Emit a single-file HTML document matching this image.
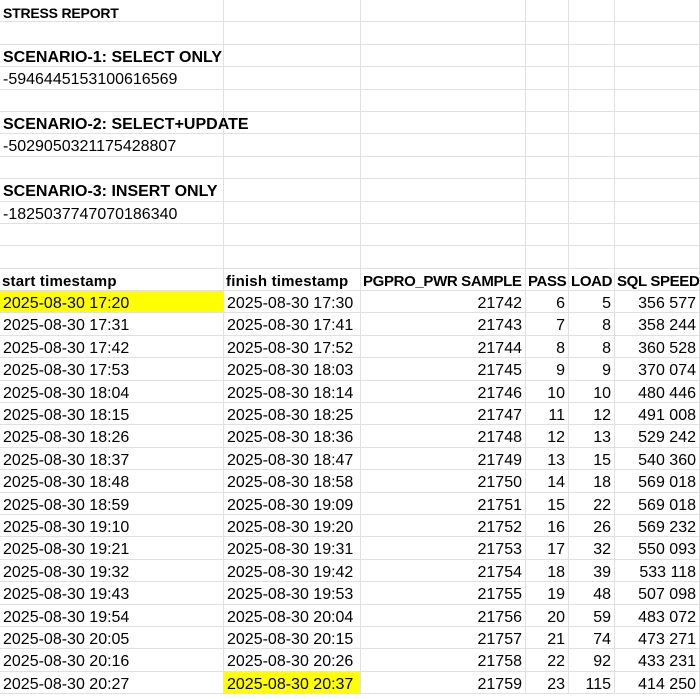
<!DOCTYPE html>
<html><head><meta charset="utf-8"><style>
body{margin:0;background:#fff;width:700px;height:699px;overflow:hidden;font-family:"Liberation Sans",sans-serif;font-size:16px;color:#000}
.r{display:grid;grid-template-columns:224px 137px 165px 43px 46px 85px;height:22.4px;box-sizing:border-box;border-bottom:1px solid #e0e0e0}
.r>div{border-right:1px solid #e0e0e0;line-height:26px;padding:0 3px;white-space:nowrap;overflow:visible;box-sizing:border-box;height:21.4px}
.r>div.n{text-align:right}
.b{font-weight:bold}
.h>div{font-weight:bold;font-size:15px;letter-spacing:-0.35px;padding:0 2px}
.h>div.t{letter-spacing:0.2px}
.s{font-size:14px;letter-spacing:-0.2px}
.y{background:#ffff00}
</style></head><body>
<div class="r"><div class="b s">STRESS REPORT</div><div></div><div></div><div></div><div></div><div></div></div>
<div class="r"><div></div><div></div><div></div><div></div><div></div><div></div></div>
<div class="r"><div class="b">SCENARIO-1: SELECT ONLY</div><div></div><div></div><div></div><div></div><div></div></div>
<div class="r"><div>-5946445153100616569</div><div></div><div></div><div></div><div></div><div></div></div>
<div class="r"><div></div><div></div><div></div><div></div><div></div><div></div></div>
<div class="r"><div class="b">SCENARIO-2: SELECT+UPDATE</div><div></div><div></div><div></div><div></div><div></div></div>
<div class="r"><div>-5029050321175428807</div><div></div><div></div><div></div><div></div><div></div></div>
<div class="r"><div></div><div></div><div></div><div></div><div></div><div></div></div>
<div class="r"><div class="b">SCENARIO-3: INSERT ONLY</div><div></div><div></div><div></div><div></div><div></div></div>
<div class="r"><div>-1825037747070186340</div><div></div><div></div><div></div><div></div><div></div></div>
<div class="r"><div></div><div></div><div></div><div></div><div></div><div></div></div>
<div class="r"><div></div><div></div><div></div><div></div><div></div><div></div></div>
<div class="r h"><div class="t">start timestamp</div><div class="t">finish timestamp</div><div>PGPRO_PWR SAMPLE</div><div>PASS</div><div>LOAD</div><div>SQL SPEED</div></div>
<div class="r"><div class="y">2025-08-30 17:20</div><div>2025-08-30 17:30</div><div class="n">21742</div><div class="n">6</div><div class="n">5</div><div class="n">356 577</div></div>
<div class="r"><div>2025-08-30 17:31</div><div>2025-08-30 17:41</div><div class="n">21743</div><div class="n">7</div><div class="n">8</div><div class="n">358 244</div></div>
<div class="r"><div>2025-08-30 17:42</div><div>2025-08-30 17:52</div><div class="n">21744</div><div class="n">8</div><div class="n">8</div><div class="n">360 528</div></div>
<div class="r"><div>2025-08-30 17:53</div><div>2025-08-30 18:03</div><div class="n">21745</div><div class="n">9</div><div class="n">9</div><div class="n">370 074</div></div>
<div class="r"><div>2025-08-30 18:04</div><div>2025-08-30 18:14</div><div class="n">21746</div><div class="n">10</div><div class="n">10</div><div class="n">480 446</div></div>
<div class="r"><div>2025-08-30 18:15</div><div>2025-08-30 18:25</div><div class="n">21747</div><div class="n">11</div><div class="n">12</div><div class="n">491 008</div></div>
<div class="r"><div>2025-08-30 18:26</div><div>2025-08-30 18:36</div><div class="n">21748</div><div class="n">12</div><div class="n">13</div><div class="n">529 242</div></div>
<div class="r"><div>2025-08-30 18:37</div><div>2025-08-30 18:47</div><div class="n">21749</div><div class="n">13</div><div class="n">15</div><div class="n">540 360</div></div>
<div class="r"><div>2025-08-30 18:48</div><div>2025-08-30 18:58</div><div class="n">21750</div><div class="n">14</div><div class="n">18</div><div class="n">569 018</div></div>
<div class="r"><div>2025-08-30 18:59</div><div>2025-08-30 19:09</div><div class="n">21751</div><div class="n">15</div><div class="n">22</div><div class="n">569 018</div></div>
<div class="r"><div>2025-08-30 19:10</div><div>2025-08-30 19:20</div><div class="n">21752</div><div class="n">16</div><div class="n">26</div><div class="n">569 232</div></div>
<div class="r"><div>2025-08-30 19:21</div><div>2025-08-30 19:31</div><div class="n">21753</div><div class="n">17</div><div class="n">32</div><div class="n">550 093</div></div>
<div class="r"><div>2025-08-30 19:32</div><div>2025-08-30 19:42</div><div class="n">21754</div><div class="n">18</div><div class="n">39</div><div class="n">533 118</div></div>
<div class="r"><div>2025-08-30 19:43</div><div>2025-08-30 19:53</div><div class="n">21755</div><div class="n">19</div><div class="n">48</div><div class="n">507 098</div></div>
<div class="r"><div>2025-08-30 19:54</div><div>2025-08-30 20:04</div><div class="n">21756</div><div class="n">20</div><div class="n">59</div><div class="n">483 072</div></div>
<div class="r"><div>2025-08-30 20:05</div><div>2025-08-30 20:15</div><div class="n">21757</div><div class="n">21</div><div class="n">74</div><div class="n">473 271</div></div>
<div class="r"><div>2025-08-30 20:16</div><div>2025-08-30 20:26</div><div class="n">21758</div><div class="n">22</div><div class="n">92</div><div class="n">433 231</div></div>
<div class="r"><div>2025-08-30 20:27</div><div class="y">2025-08-30 20:37</div><div class="n">21759</div><div class="n">23</div><div class="n">115</div><div class="n">414 250</div></div>
</body></html>
